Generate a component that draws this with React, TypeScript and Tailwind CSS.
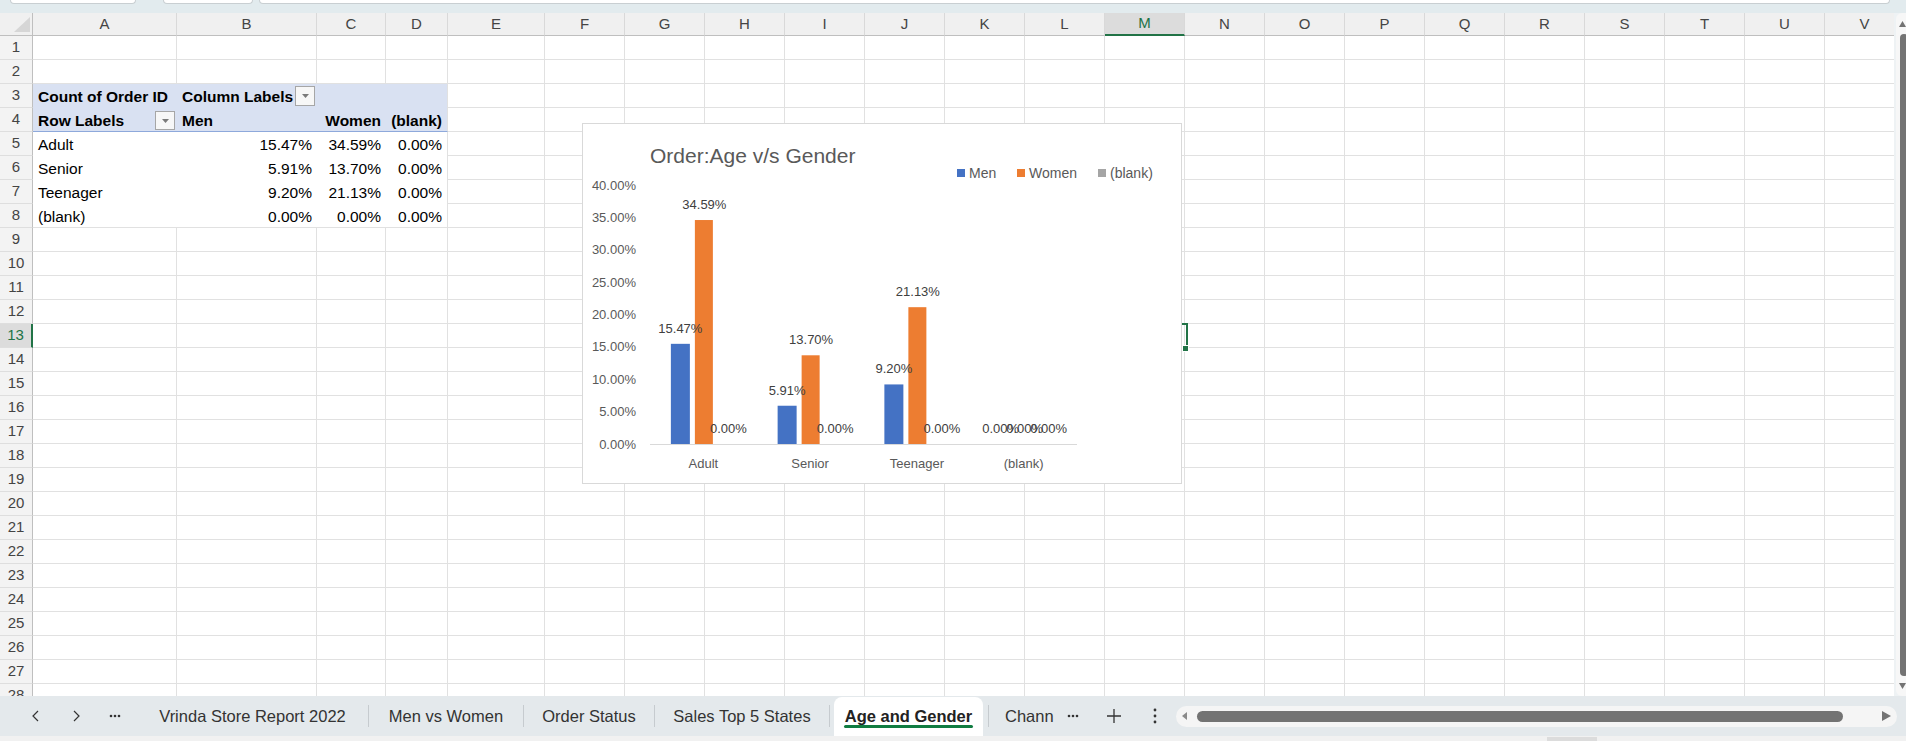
import React from "react";
import clsx from "clsx";

const COLS = ["A", "B", "C", "D", "E", "F", "G", "H", "I", "J", "K", "L", "M", "N", "O", "P", "Q", "R", "S", "T", "U", "V"];
// column widths, spelled out so tailwind sees them
const WCLS = ["w-[144px]", "w-[140px]", "w-[69px]", "w-[62px]", "w-[97px]", ...Array(17).fill("w-20")];
const SEL_COL = 12; // M
const SEL_ROW = 13;
const ROWS = Array.from({ length: 28 }, (_, i) => i + 1);

const PIVOT: Record<number, string[]> = {
  5: ["Adult", "15.47%", "34.59%", "0.00%"],
  6: ["Senior", "5.91%", "13.70%", "0.00%"],
  7: ["Teenager", "9.20%", "21.13%", "0.00%"],
  8: ["(blank)", "0.00%", "0.00%", "0.00%"],
};

function Txt({ children, right, bold }: { children: React.ReactNode; right?: boolean; bold?: boolean }) {
  return (
    <span
      className={clsx(
        "absolute inset-0 px-[5px] leading-[26px] whitespace-nowrap text-[15.5px] text-black",
        right ? "text-right" : "text-left",
        bold && "font-bold",
      )}
    >
      {children}
    </span>
  );
}

function DropBtn({ low }: { low?: boolean }) {
  return (
    <div
      className={clsx(
        "absolute right-[2px] w-[20px] border border-[#a6a6a6] bg-[#f7f7f7] flex items-center justify-center",
        low ? "top-[3px] h-[19px]" : "top-[2px] h-[20px]",
      )}
    >
      <svg width="7" height="4" viewBox="0 0 7 4">
        <path d="M0 0 L7 0 L3.5 4 Z" fill="#7a7a7a" />
      </svg>
    </div>
  );
}

function cellContent(r: number, c: number) {
  if (r === 3 && c === 0) return <Txt bold>Count of Order ID</Txt>;
  if (r === 3 && c === 1)
    return (
      <>
        <Txt bold>Column Labels</Txt>
        <DropBtn />
      </>
    );
  if (r === 4 && c === 0)
    return (
      <>
        <Txt bold>Row Labels</Txt>
        <DropBtn low />
      </>
    );
  if (r === 4 && c === 1) return <Txt bold>Men</Txt>;
  if (r === 4 && c === 2) return <Txt bold right>Women</Txt>;
  if (r === 4 && c === 3) return <Txt bold right>(blank)</Txt>;
  const row = PIVOT[r];
  if (row && c <= 3) return c === 0 ? <Txt>{row[0]}</Txt> : <Txt right>{row[c]}</Txt>;
  return null;
}

function Cell({ r, c }: { r: number; c: number }) {
  const inPivot = r >= 3 && r <= 8 && c <= 3;
  const rightLine = !(inPivot && c < 3);
  let bottom = "border-b border-b-[#e1e1e1]";
  if (inPivot) {
    if (r === 4) bottom = "border-b border-b-[#8ea9db]";
    else if (r === 8) bottom = "border-b border-b-[#e1e1e1]";
    else bottom = "";
  }
  return (
    <div
      className={clsx(
        "relative shrink-0 h-full",
        WCLS[c],
        rightLine && "border-r border-r-[#e1e1e1]",
        bottom,
        inPivot && r <= 4 && "bg-[#d9e1f2]",
      )}
    >
      {cellContent(r, c)}
    </div>
  );
}

const CATS = ["Adult", "Senior", "Teenager", "(blank)"];
const DATA = [
  [15.47, 34.59, 0],
  [5.91, 13.7, 0],
  [9.2, 21.13, 0],
  [0, 0, 0],
];
const COLORS = ["#4472c4", "#ed7d31", "#a5a5a5"];
const Y0 = 320;
const K = 6.475;
const X0 = 67;
const CW = 106.75;

function Chart() {
  return (
    <div className="absolute left-[582px] top-[123px] w-[600px] h-[361px] bg-white border border-[#d9d9d9]">
      <svg width="598" height="359" className="block">
        <text x="67" y="39" fontSize="21" fill="#595959">
          Order:Age v/s Gender
        </text>
        {["Men", "Women", "(blank)"].map((l, i) => {
          const sx = [374, 434, 515][i];
          return (
            <g key={l}>
              <rect x={sx} y="45" width="8" height="8" fill={COLORS[i]} />
              <text x={sx + 12} y="54" fontSize="14" fill="#595959">
                {l}
              </text>
            </g>
          );
        })}
        {[0, 5, 10, 15, 20, 25, 30, 35, 40].map((v) => (
          <text key={v} x="53" y={Y0 - v * K + 4.6} fontSize="13" fill="#595959" textAnchor="end">
            {v}.00%
          </text>
        ))}
        <line x1="67" x2="494" y1={Y0 + 0.5} y2={Y0 + 0.5} stroke="#d9d9d9" strokeWidth="1" />
        {DATA.map((vals, i) => {
          const c = X0 + CW * (i + 0.5);
          return (
            <g key={i}>
              {vals.map((v, j) => {
                const x = c - 32.5 + j * 24;
                const h = v * K;
                return <rect key={j} x={x} y={Y0 - h} width={j === 1 ? 18 : 19} height={h} fill={COLORS[j]} />;
              })}
              {vals.map((v, j) => {
                const x = c - 32.5 + j * 24 + 9.5;
                return (
                  <text key={"l" + j} x={x} y={Y0 - v * K - 11} fontSize="13" fill="#404040" textAnchor="middle">
                    {v.toFixed(2)}%
                  </text>
                );
              })}
              <text x={c} y="343.6" fontSize="13" fill="#595959" textAnchor="middle">
                {CATS[i]}
              </text>
            </g>
          );
        })}
      </svg>
    </div>
  );
}

function Dots() {
  return (
    <svg width="12" height="4" viewBox="0 0 12 4">
      <circle cx="2" cy="2" r="1.3" fill="#333" />
      <circle cx="6" cy="2" r="1.3" fill="#333" />
      <circle cx="10" cy="2" r="1.3" fill="#333" />
    </svg>
  );
}

function Tab({ w, children }: { w: string; children: React.ReactNode }) {
  return <div className={clsx("h-full shrink-0 flex items-center justify-center whitespace-nowrap", w)}>{children}</div>;
}

const Sep = () => <div className="w-px h-[22px] bg-[#c6cbcf] shrink-0" />;

export default function App() {
  return (
    <div className="relative w-[1906px] h-[741px] overflow-hidden bg-white font-['Liberation_Sans',Arial,sans-serif]">
      {/* formula bar remnants */}
      <div className="h-[13px] bg-[#e2ebee] flex items-start">
        <div className="ml-[10px] w-[126px] h-[4px] bg-white border border-t-0 border-[#c9cfd2] rounded-b-[4px]" />
        <div className="ml-[27px] w-[90px] h-[4px] bg-white border border-t-0 border-[#c9cfd2] rounded-b-[4px]" />
        <div className="ml-[6px] w-[1631px] h-[4px] bg-white border border-t-0 border-[#c9cfd2] rounded-b-[4px]" />
      </div>

      <div className="flex h-[683px]">
        <div className="w-[1894px] overflow-hidden">
          {/* column headers */}
          <div className="flex h-[23px] bg-[#f0f0f0]">
            <div className="relative w-[33px] shrink-0 h-full border-b border-b-[#bfbfbf] border-r border-r-[#bfbfbf]">
              <svg className="absolute left-[14px] top-[4px]" width="16" height="15" viewBox="0 0 16 15">
                <path d="M16 0 L16 15 L0 15 Z" fill="#d6d6d6" />
              </svg>
            </div>
            {COLS.map((l, c) => (
              <div
                key={l}
                className={clsx(
                  "shrink-0 h-full flex items-center justify-center text-[15px] border-r border-r-[#d9d9d9]",
                  WCLS[c],
                  c === SEL_COL
                    ? "bg-[#dcdcdc] text-[#217346] border-b-2 border-b-[#217346]"
                    : "text-[#444] border-b border-b-[#bfbfbf]",
                )}
              >
                {l}
              </div>
            ))}
          </div>

          {/* rows */}
          <div className="h-[660px] overflow-hidden">
            {ROWS.map((r) => (
              <div key={r} className="flex h-[24px]">
                <div
                  className={clsx(
                    "w-[33px] shrink-0 h-full flex items-center justify-center text-[15px] border-b border-b-[#dedede]",
                    r === SEL_ROW
                      ? "bg-[#dcdcdc] text-[#217346] border-r-2 border-r-[#217346]"
                      : "bg-[#f3f3f3] text-[#444] border-r border-r-[#bfbfbf]",
                  )}
                >
                  {r}
                </div>
                {COLS.map((l, c) => (
                  <Cell key={l} r={r} c={c} />
                ))}
              </div>
            ))}
          </div>
        </div>

        {/* vertical scrollbar */}
        <div className="w-[12px] h-full bg-[#eef2f4] pl-[2px]">
          <div className="relative h-full bg-[#f7f7f7] rounded-l-[6px]">
            <svg className="absolute left-[3px] top-[8px]" width="7" height="6" viewBox="0 0 7 6">
              <path d="M3.5 0 L7 6 L0 6 Z" fill="#737373" />
            </svg>
            <div className="absolute left-[4px] top-[21px] w-[8px] h-[642px] rounded-full bg-[#737373]" />
            <svg className="absolute left-[3px] top-[670px]" width="7" height="6" viewBox="0 0 7 6">
              <path d="M0 0 L7 0 L3.5 6 Z" fill="#737373" />
            </svg>
          </div>
        </div>
      </div>

      {/* sheet tabs */}
      <div className="h-[40px] bg-[#e4e9ec] flex items-center text-[16.5px] text-[#333]">
        <div className="ml-[25px] w-[20px] flex justify-center">
          <svg width="7" height="12" viewBox="0 0 7 12">
            <path d="M6 1 L1 6 L6 11" fill="none" stroke="#333" strokeWidth="1.2" />
          </svg>
        </div>
        <div className="ml-[21px] w-[20px] flex justify-center">
          <svg width="7" height="12" viewBox="0 0 7 12">
            <path d="M1 1 L6 6 L1 11" fill="none" stroke="#333" strokeWidth="1.2" />
          </svg>
        </div>
        <div className="ml-[19px] w-[20px] flex justify-center">
          <Dots />
        </div>
        <div className="w-[12px]" />
        <Tab w="w-[231px]">Vrinda Store Report 2022</Tab>
        <Sep />
        <Tab w="w-[154px]">Men vs Women</Tab>
        <Sep />
        <Tab w="w-[130px]">Order Status</Tab>
        <Sep />
        <Tab w="w-[174px]">Sales Top 5 States</Tab>
        <Sep />
        <div className="relative ml-[4px] w-[149px] h-[39px] self-end shrink-0 bg-white rounded-t-[8px] flex items-center justify-center font-bold text-[#222] whitespace-nowrap">
          Age and Gender
          <div className="absolute left-[10px] top-[28px] w-[129px] h-[3px] bg-[#107c41] rounded-full" />
        </div>
        <div className="ml-[5px]" />
        <Sep />
        <div className="ml-[16px] w-[49px] overflow-hidden whitespace-nowrap">Chann</div>
        <div className="ml-[9px] w-[20px] flex justify-center">
          <Dots />
        </div>
        <div className="ml-[21px] w-[20px] flex justify-center">
          <svg width="14" height="14" viewBox="0 0 14 14">
            <path d="M7 0 V14 M0 7 H14" stroke="#333" strokeWidth="1.3" />
          </svg>
        </div>
        <div className="ml-[21px] w-[20px] flex justify-center">
          <svg width="4" height="16" viewBox="0 0 4 16">
            <circle cx="2" cy="2" r="1.4" fill="#333" />
            <circle cx="2" cy="8" r="1.4" fill="#333" />
            <circle cx="2" cy="14" r="1.4" fill="#333" />
          </svg>
        </div>
        <div className="ml-[11px] w-[721px] h-[21px] rounded-full bg-[#f5f5f5] flex items-center">
          <svg className="ml-[6px]" width="5" height="8" viewBox="0 0 5 8">
            <path d="M5 0 L5 8 L0 4 Z" fill="#8a8a8a" />
          </svg>
          <div className="ml-[10px] w-[646px] h-[11px] rounded-full bg-[#737373]" />
          <svg className="ml-[39px]" width="9" height="10" viewBox="0 0 9 10">
            <path d="M0 0 L9 5 L0 10 Z" fill="#737373" />
          </svg>
        </div>
      </div>
      <div className="h-[5px] bg-[#f1f1f1] flex">
        <div className="ml-[1547px] mt-[1px] w-[50px] h-[4px] bg-[#dcdcdc]" />
      </div>

      {/* active cell M13, mostly under the chart */}
      <div className="absolute left-[1103px] top-[323px] w-[85px] h-[26px] border-2 border-[#217346]" />
      <div className="absolute left-[1182px] top-[345px] w-[7px] h-[7px] bg-[#217346] border border-white" />

      <Chart />
    </div>
  );
}
